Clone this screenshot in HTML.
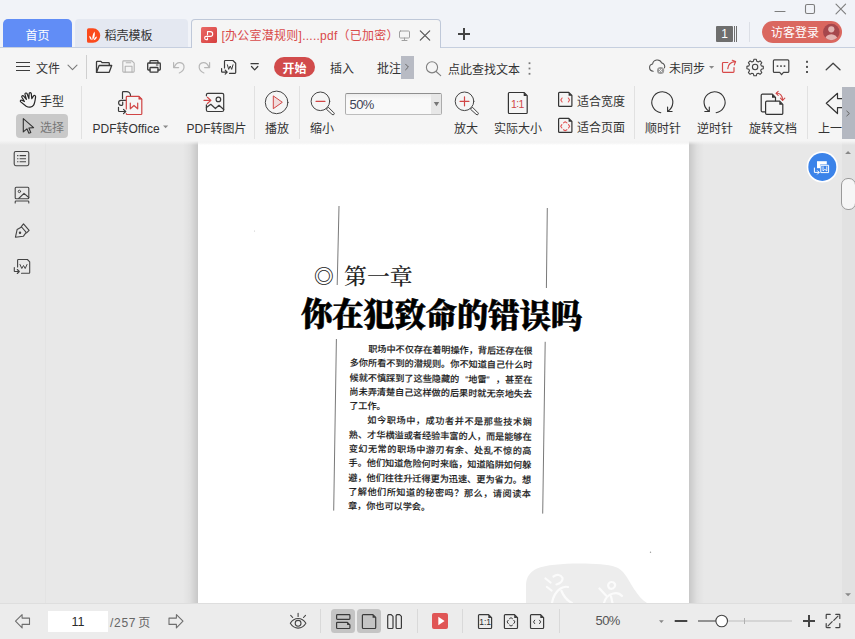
<!DOCTYPE html>
<html lang="zh-CN">
<head>
<meta charset="utf-8">
<title>[办公室潜规则].....pdf（已加密）</title>
<style>
*{box-sizing:border-box;margin:0;padding:0}
html,body{width:855px;height:639px;overflow:hidden;background:#f5f5f5}
body{font-family:"Liberation Sans","Noto Sans CJK SC",sans-serif;font-size:12px;color:#333;position:relative}
#app{position:absolute;left:0;top:0;width:855px;height:639px;overflow:hidden;background:#f5f5f5}
.abs{position:absolute}
.t{position:absolute;white-space:nowrap;line-height:16px;height:16px;font-size:12px;color:#333;margin-top:2px}
/* title bar */
#titlebar{position:absolute;left:0;top:0;width:855px;height:47px;background:#f1f3f8}
#tabline{position:absolute;left:0;top:47px;width:855px;height:1px;background:#c6cfdf}
#tab1{position:absolute;left:3px;top:19px;width:69px;height:28px;background:#618df6;border-radius:5px 5px 0 0;color:#fff;text-align:center}
#tab2{position:absolute;left:75px;top:19px;width:113px;height:28px;background:#e4e8f1;border-radius:4px 4px 0 0}
#tab3{position:absolute;left:191px;top:19px;width:250px;height:30px;background:#f5f5f5;border:1px solid #bfc8d9;border-bottom:none;border-radius:4px 4px 0 0}
/* toolbar */
#menurow{position:absolute;left:0;top:48px;width:855px;height:37px;background:#f5f5f5}
#ribbon{position:absolute;left:0;top:85px;width:855px;height:56px;background:#f5f5f5}
.vsep{position:absolute;width:1px;background:#e1e1e1}
/* doc */
#doc{position:absolute;left:0;top:141px;width:855px;height:462px;background:#e8e8e8;overflow:hidden}
#docfade{position:absolute;left:0;top:0;width:855px;height:4px;background:linear-gradient(#f4f4f4,rgba(232,232,232,0))}
#sideborder{position:absolute;left:45px;top:0;width:1px;height:462px;background:#e3e3e3}
#shl{position:absolute;left:183px;top:0;width:15px;height:462px;background:linear-gradient(90deg,rgba(0,0,0,0),rgba(0,0,0,.035) 45%,rgba(0,0,0,.14))}
#shr{position:absolute;left:689px;top:0;width:15px;height:462px;background:linear-gradient(270deg,rgba(0,0,0,0),rgba(0,0,0,.035) 45%,rgba(0,0,0,.14))}
#page{position:absolute;left:198px;top:0;width:491px;height:462px;background:#fff;overflow:hidden}
#pagefade{position:absolute;left:0;top:0;width:491px;height:4px;background:linear-gradient(#f0f0f0,rgba(255,255,255,0))}
#vscroll{position:absolute;left:842px;top:0;width:13px;height:462px;background:#e2e2e2}
#thumb{position:absolute;left:841px;top:37px;width:15px;height:32px;background:#f6f6f6;border:1px solid #9a9a9a;border-radius:7px}
/* status */
#status{position:absolute;left:0;top:603px;width:855px;height:36px;background:#ececec;box-shadow:inset 0 1px 0 #dedede}
#pgbox{position:absolute;left:48px;top:8px;width:60px;height:21px;background:#fff;text-align:center;line-height:23px;font-size:12.5px;color:#2a2a2a}
.sbtn{position:absolute;top:6px;width:24px;height:24px;background:#c4c4c4;border-radius:3.5px}
/* scanned text */
#bul{position:absolute;left:115.8px;top:121.6px;font-family:"Liberation Serif","Noto Serif CJK SC",serif;font-size:20.3px;line-height:28px;color:#222}
#chap{position:absolute;left:146px;top:122px;font-family:"Liberation Serif","Noto Serif CJK SC",serif;font-size:21.6px;font-weight:500;line-height:28px;color:#222;white-space:nowrap;transform-origin:0 50%;transform:scaleX(1.06)}
#head{position:absolute;left:102.5px;top:151.7px;font-family:"Liberation Serif","Noto Serif CJK SC",serif;font-weight:900;-webkit-text-stroke:.6px #000;font-size:33.4px;line-height:44px;color:#000;white-space:nowrap;transform-origin:0 50%;transform:rotate(0.45deg) scaleX(0.935)}
#body{position:absolute;left:152px;top:200.5px;width:184px;font-family:"Liberation Sans","Noto Sans CJK SC",sans-serif;font-weight:500;-webkit-text-stroke:.1px #1c1c1c;font-size:9.13px;line-height:14.28px;color:#1c1c1c;transform-origin:0 0;transform:rotate(0.7deg)}
#body p{white-space:nowrap;width:182.8px;text-align:justify;text-align-last:justify}
#body .q{display:inline-block;width:9.13px}
#body p.l{text-align-last:left;text-align:left}
#icons{position:absolute;left:0;top:0;width:855px;height:639px;pointer-events:none}
</style>
</head>
<body>
<div id="app">
<!-- TITLEBAR -->
<div id="titlebar"></div>
<div id="tabline"></div>
<div id="tab1"><span class="t" style="left:22.5px;top:7px;color:#fff">首页</span></div>
<div id="tab2"><span class="t" style="left:29.5px;top:7px;color:#333">稻壳模板</span></div>
<div id="tab3"><span class="t" style="left:29.5px;top:6px;color:#d94a4a;letter-spacing:0.25px">[办公室潜规则].....pdf（已加密）</span></div>
<span class="t" style="left:771px;top:23px;color:#fff;z-index:3">访客登录</span>
<div class="abs" style="left:762px;top:21px;width:80px;height:22px;border-radius:11px;background:#da675f"></div>
<div class="abs" style="left:716px;top:26px;width:17px;height:16px;background:#6e6e6e;border-radius:1px;color:#fff;font-size:12px;line-height:17px;text-align:center">1</div>
<!-- MENU ROW -->
<div id="menurow"></div>
<span class="t" style="left:36px;top:59px">文件</span>
<div class="abs" style="left:274px;top:57px;width:41px;height:20px;border-radius:10px;background:#d14b4b"></div>
<span class="t" style="left:282.5px;top:59px;color:#fff;font-weight:bold">开始</span>
<span class="t" style="left:330px;top:59px">插入</span>
<span class="t" style="left:377px;top:59px">批注</span>
<div class="abs" style="left:401px;top:56px;width:13px;height:23px;background:#b8bbc4"></div>
<span class="t" style="left:448px;top:60px">点此查找文本</span>
<span class="t" style="left:669px;top:59px">未同步</span>
<!-- RIBBON -->
<div id="ribbon"></div>
<span class="t" style="left:40px;top:92px">手型</span>
<div class="abs" style="left:16px;top:114px;width:52px;height:24px;border-radius:4px;background:#c9c9c9"></div>
<span class="t" style="left:40px;top:118px;color:#777">选择</span>
<span class="t" style="left:92.5px;top:119px">PDF转Office</span>
<span class="t" style="left:186.5px;top:119px">PDF转图片</span>
<span class="t" style="left:265px;top:119px">播放</span>
<span class="t" style="left:310px;top:119px">缩小</span>
<div class="abs" style="left:345px;top:93px;width:97px;height:22px;background:linear-gradient(#ececec,#f9f9f9 5px);border:1px solid #acacac;border-top-color:#8f8f8f;border-bottom-color:#bdbdbd;border-radius:2px"></div>
<div class="abs" style="left:431px;top:94px;width:10px;height:20px;background:#e7e7e7"></div>
<span class="t" style="left:349.5px;top:95px;color:#3e4456;font-size:13px;letter-spacing:-.6px">50%</span>
<span class="t" style="left:454px;top:119px">放大</span>
<span class="t" style="left:494px;top:119px">实际大小</span>
<span class="t" style="left:577px;top:92px">适合宽度</span>
<span class="t" style="left:577px;top:118px">适合页面</span>
<span class="t" style="left:645px;top:119px">顺时针</span>
<span class="t" style="left:697px;top:119px">逆时针</span>
<span class="t" style="left:749px;top:119px">旋转文档</span>
<span class="t" style="left:818px;top:119px">上一</span>
<div class="abs" style="left:842px;top:87px;width:13px;height:52px;background:#b4b8c1"></div>
<div class="vsep" style="left:86px;top:55px;height:24px;background:#cfcfcf"></div>
<div class="vsep" style="left:81px;top:86px;height:53px"></div>
<div class="vsep" style="left:254px;top:86px;height:53px"></div>
<div class="vsep" style="left:299px;top:86px;height:53px"></div>
<div class="vsep" style="left:634px;top:86px;height:53px"></div>
<div class="vsep" style="left:807px;top:86px;height:53px"></div>
<div class="vsep" style="left:749px;top:22px;height:20px;background:#dcdfe6"></div>
<!-- DOC -->
<div id="doc">
  <div id="sideborder"></div>
  <div id="shl"></div><div id="shr"></div>
  <div id="vscroll"></div>
  <div id="page">
    <svg class="abs" style="left:0;top:0" width="491" height="462" viewBox="198 141 491 462"><path d="M526 603V586C526 578 529 572.500 537 568.500C547 564.500 565 563.200 585 563.500C600 563.800 612 565 618 568C625 572 629 581 634 589C638 595 642 600 647 603Z" fill="#ededed"/><g fill="none" stroke="#fbfbfb" stroke-width="2.200" stroke-linecap="round" stroke-linejoin="round"><path d="M545.500 578.500L550.500 582.500M547 587L551.500 590.500M553.500 576.500C557 574 561 574.500 562.500 578C563 581 560 583.500 556.500 584.500M552 603C553 597 556 591.500 560.500 588.500C563 587 566 586.500 568 587M561.500 591C563.500 596 567 600.500 572 603"/><path d="M611.500 582C614.500 582 616 584.500 614.500 587C613 589.500 609.500 589.500 608.500 587C607.500 584.500 609 582 611.500 582ZM599.500 588.500L606 595.500M604 603C605 598.500 608 595 613 593.500C616.500 592.500 620 593.500 622 596M611 596.500L612.500 603"/></g><circle cx="650.500" cy="552.300" r=".7" fill="#9a9a9a"/><circle cx="254.500" cy="231" r=".6" fill="#c4c4c4"/></svg>
    <div id="bul">◎</div>
    <div id="chap">第一章</div>
    <div id="head">你在犯致命的错误吗</div>
    <div id="body">
      <p style="text-indent:18.3px">职场中不仅存在着明操作，背后还存在很</p>
      <p>多你所看不到的潜规则。你不知道自己什么时</p>
      <p>候就不慎踩到了这些隐藏的<span class="q" style="text-align:right;text-align-last:right">“</span>地雷<span class="q" style="text-align:left;text-align-last:left">”</span>，甚至在</p>
      <p>尚未弄清楚自己这样做的后果时就无奈地失去</p>
      <p class="l">了工作。</p>
      <p style="text-indent:18.3px">如今职场中，成功者并不是那些技术娴</p>
      <p>熟、才华横溢或者经验丰富的人，而是能够在</p>
      <p>变幻无常的职场中游刃有余、处乱不惊的高</p>
      <p>手。他们知道危险何时来临，知道陷阱如何躲</p>
      <p>避，他们往往升迁得更为迅速、更为省力。想</p>
      <p>了解他们所知道的秘密吗？那么，请阅读本</p>
      <p class="l">章，你也可以学会。</p>
    </div>
    <div id="pagefade"></div>
  </div>
  <div id="docfade"></div>
  <div id="thumb"></div>
</div>
<!-- STATUS -->
<div id="status">
  <div id="pgbox">11</div>
  <span class="t" style="left:110px;top:10px;color:#666"><span style="letter-spacing:.7px">/257</span><span style="margin-left:2px">页</span></span>
  <div class="sbtn" style="left:331px"></div>
  <div class="sbtn" style="left:357px"></div>
  <div class="abs" style="left:432px;top:10px;width:16px;height:16px;border-radius:2px;background:#e05656"></div>
  <span class="t" style="left:595.5px;top:8px;color:#555;font-size:13px;letter-spacing:-.6px">50%</span>
  <div class="vsep" style="left:320px;top:6px;height:24px;background:#d9d9d9"></div>
  <div class="vsep" style="left:417px;top:6px;height:24px;background:#d9d9d9"></div>
  <div class="vsep" style="left:462px;top:6px;height:24px;background:#d9d9d9"></div>
  <div class="vsep" style="left:559px;top:6px;height:24px;background:#d9d9d9"></div>
</div>
<!-- ICON OVERLAY -->
<svg id="icons" width="855" height="639" viewBox="0 0 855 639" fill="none" stroke="#3d3d3d" stroke-width="1" stroke-linecap="round" stroke-linejoin="round">
<!-- ===== title bar ===== -->
<g stroke="#7d7d7d" stroke-width="1.1">
<path d="M775 11.5h10"/>
<rect x="805.5" y="4.5" width="9" height="9" rx="1.6"/>
<path d="M836 4.2l9.6 9.6M845.6 4.2l-9.6 9.6"/>
</g>
<path d="M734.5 26v16M736.5 26v16" stroke="#6e6e6e" stroke-width="1" stroke-linecap="butt"/>
<!-- avatar -->
<g stroke="none">
<circle cx="831.3" cy="32" r="8.3" fill="#a6474c"/>
<clipPath id="avc"><circle cx="831.3" cy="32" r="8.3"/></clipPath>
<g clip-path="url(#avc)" fill="#e3b3b1"><circle cx="831.3" cy="29.3" r="3.1"/><ellipse cx="831.3" cy="39.8" rx="6.2" ry="5.6"/></g>
</g>
<!-- tab2 icon -->
<g stroke="none">
<path d="M88.6 28.3h4.4a7.25 7.25 0 0 1 0 14.5h-4.4a1.6 1.6 0 0 1-1.6-1.6v-11.3a1.6 1.6 0 0 1 1.6-1.6z" fill="#fb4a1c"/>
<path d="M92.6 40.2c-.6-2.600-.2-5.600 1.900-8.600c.9 3.200.2 6.300-1.900 8.600zM91.700 40.300c-1.600-.9-2.400-2.500-2.400-4.600c1.700.9 2.500 2.500 2.400 4.600zM93.700 40.300c.3-1.900 1.400-3.200 3.300-3.700c-.2 2-1.300 3.300-3.300 3.700z" fill="#fff"/>
</g>
<!-- tab3 pdf icon -->
<defs><linearGradient id="pg" x1="0" y1="0" x2="1" y2="1"><stop offset="0" stop-color="#ea6a66"/><stop offset="1" stop-color="#d63f3f"/></linearGradient></defs>
<rect x="201" y="27" width="16" height="16" rx="1.5" fill="url(#pg)" stroke="none"/>
<path d="M207.500 34.700v-3.100h2.800a2.400 2.400 0 0 1 0 4.800h-4.100a1.600 1.600 0 0 0 0 3.200h1.300v-1.700" stroke="#fff" stroke-width="1.100"/>
<!-- monitor, close, plus -->
<g stroke="#a0a0a0" stroke-width="1"><rect x="399.500" y="31" width="10" height="7" rx="1"/><path d="M404.500 38v2.500M402 40.500h5"/></g>
<path d="M420.300 30.800l9.400 9.400M429.700 30.800l-9.400 9.400" stroke="#555" stroke-width="1.200"/>
<path d="M458 34h12M464 28v12" stroke="#444" stroke-width="2" stroke-linecap="butt"/>
<!-- ===== menu row ===== -->
<path d="M16 62.500h14M16 66.500h14M16 70.500h14" stroke="#3d3d3d" stroke-width="1.200" stroke-linecap="butt"/>
<path d="M68 65.200l4.500 4.500l4.500-4.500" stroke="#7a7a7a" stroke-width="1.100"/>
<!-- folder -->
<g stroke="#3a3a3a" stroke-width="1.300">
<path d="M96.500 72.300v-10.100a.8.800 0 0 1 .8-.8h3.600l1.300 1.300h6.300a.8.800 0 0 1 .8.800v1.900"/>
<path d="M96.500 72.300l2.600-6.800h12.600l-2.500 6.800z"/>
</g>
<!-- save (disabled) -->
<g stroke="#b4b4b4" stroke-width="1.100">
<path d="M123.600 60.900h8.300l2.300 2.300v8.100a.8.800 0 0 1-.8.800h-9.800a.8.800 0 0 1-.8-.8v-9.600a.8.800 0 0 1 .8-.8z"/>
<path d="M126.200 62.700h4.600M125.200 72v-5.800h6.800v5.800"/>
</g>
<!-- printer -->
<g stroke="#3a3a3a" stroke-width="1.300">
<path d="M150 63v-1.500a.8.800 0 0 1 .8-.8h6.400a.8.800 0 0 1 .8.800v1.500"/>
<path d="M150 70h-1.500a.8.800 0 0 1-.8-.8v-5.400a.8.800 0 0 1 .8-.8h11a.8.800 0 0 1 .8.800v5.400a.8.800 0 0 1-.8.800h-1.500"/>
<rect x="150" y="67.500" width="8" height="4.700" rx=".7"/>
<path d="M156.300 65h1.700" stroke-width="1"/>
</g>
<!-- undo / redo -->
<g stroke="#b7b7b7" stroke-width="1.200">
<path d="M173.600 62.600v5h5"/>
<path d="M174.200 67.300C175.500 64 178 62.400 180 62.600C182.600 62.900 184.200 65 184 67.500C183.800 70 182 71.800 179.300 73"/>
<path d="M209.600 62.600v5h-5"/>
<path d="M209 67.300C207.700 64 205.200 62.400 203.200 62.600C200.600 62.900 199 65 199.200 67.500C199.400 70 201.200 71.800 203.900 73"/>
</g>
<!-- convert -->
<g stroke="#3a3a3a" stroke-width="1.200">
<path d="M224.500 68v-6.700a.8.800 0 0 1 .8-.8h7.600l2.800 2.700v9.300a.8.800 0 0 1-.8.800h-5.400"/>
<path d="M227.400 64.800l1.300 4.600l1.500-3.400l1.500 3.400l1.300-4.600" stroke-width="1"/>
<path d="M221.600 68.500v3a.6.600 0 0 0 .6.600h4.800M225.200 70.100l2 2l-2 2"/>
</g>
<path d="M251 63.700h7.300M251.500 66.500l3.150 3.400l3.150-3.400" stroke="#3a3a3a" stroke-width="1.200"/>
<path d="M405.600 64.200l2.800 2.800l-2.800 2.800" stroke="#666" stroke-width="1"/>
<!-- search -->
<g stroke="#808080" stroke-width="1.100"><circle cx="432" cy="67.300" r="5.600"/><path d="M436.100 71.500l4.600 4.200"/></g>
<g fill="#7a7a7a" stroke="none"><rect x="528.600" y="62.300" width="1.800" height="1.800"/><rect x="528.600" y="67.600" width="1.800" height="1.800"/><rect x="528.600" y="72.900" width="1.800" height="1.800"/></g>
<!-- cloud -->
<path d="M653.200 71.200a3.600 3.600 0 0 1-.6-7.150a4.700 4.700 0 0 1 9-1.200a3.700 3.700 0 0 1 2.900 5" stroke="#555" stroke-width="1.100"/>
<circle cx="660.600" cy="70.500" r="3.600" fill="#9a9a9a" stroke="none"/>
<path d="M659.300 69.200l2.600 2.600M661.900 69.200l-2.600 2.600" stroke="#fff" stroke-width=".9"/>
<path d="M709 66h5.200l-2.600 2.800z" fill="#8a8a8a" stroke="none"/>
<!-- share -->
<g stroke="#d84a4a" stroke-width="1.200">
<path d="M727.800 62.500h-4.500a.8.800 0 0 0-.8.800v8.200a.8.800 0 0 0 .8.800h9.900a.8.800 0 0 0 .8-.8v-4"/>
<path d="M727.800 68.600c.3-3.900 3.100-6.500 7.400-6.900M732.300 60.300l3.300 1.300l-1.300 3.300"/>
</g>
<!-- gear -->
<g stroke="#444" stroke-width="1.100">
<circle cx="755.100" cy="67" r="2.700"/>
<path d="M753.900 59.300h2.400l.5 2l1.500.7l1.800-1.100l1.700 1.700l-1.100 1.800l.6 1.500l2 .5v2.400l-2 .5l-.6 1.500l1.100 1.800l-1.700 1.700l-1.800-1.100l-1.500.6l-.5 2h-2.400l-.5-2l-1.500-.6l-1.800 1.100l-1.700-1.700l1.100-1.800l-.6-1.500l-2-.5v-2.400l2-.5l.6-1.500l-1.100-1.800l1.700-1.700l1.800 1.100l1.500-.7z"/>
</g>
<!-- comment -->
<path d="M774.400 59.900h13.400a1 1 0 0 1 1 1v10.500a1 1 0 0 1-1 1h-4.300l-1.900 2.300l-1.900-2.300h-5.300a1 1 0 0 1-1-1v-10.500a1 1 0 0 1 1-1z" stroke="#444" stroke-width="1.200"/>
<g fill="#444" stroke="none"><rect x="776.700" y="65.300" width="1.600" height="1.600"/><rect x="780.200" y="65.300" width="1.600" height="1.600"/><rect x="783.700" y="65.300" width="1.600" height="1.600"/></g>
<g fill="#555" stroke="none"><rect x="806" y="60.800" width="2" height="2"/><rect x="806" y="65.900" width="2" height="2"/><rect x="806" y="71" width="2" height="2"/></g>
<path d="M826.200 69.800l6.900-6.600l6.900 6.600" stroke="#444" stroke-width="1.300"/>
<!-- ===== ribbon ===== -->
<!-- hand -->
<path d="M20.700 101.900C19.800 101 20.600 99.800 21.800 100.200L24.400 101.500L21.900 97.300C21.300 96 22.800 95 23.700 96.100L26.400 99.400L25 94.400C24.700 93 26.500 92.400 27.100 93.800L28.900 98.600L29.100 93.800C29.200 92.400 31.100 92.300 31.300 93.700L31.800 98.600L33.400 96.200C34 95 35.800 95.400 35.600 96.800C35.200 100 34.900 103 33.600 105.200C32 107.600 28.600 107.700 26.200 106.200Z" stroke="#262626" stroke-width="1.200"/>
<!-- cursor -->
<path d="M23.300 118.700v13.200l3.600-3.100l2 4.500l1.900-.8l-1.900-4.500l4.700-.4z" stroke="#333" stroke-width="1.100"/>
<!-- pdf to office -->
<g stroke="#3a3a3a" stroke-width="1.200">
<path d="M122.500 98.500v-6.100a.8.800 0 0 1 .8-.8h3.200a4 4 0 0 1 4 4"/>
<path d="M126 100.300h-4.900a2.500 2.500 0 0 0 0 5h.8a.8.800 0 0 0 .8-.8v-2.500"/>
<path d="M118.500 107.300v3.400a.8.800 0 0 0 .8.800h6.200M123.500 109.300l2.200 2.200l-2.200 2.200"/>
</g>
<g stroke="#d04545" stroke-width="1.200">
<path d="M126.300 109v-11.800a.8.800 0 0 1 .8-.8h11.900l2.800 2.800v14.500a.8.800 0 0 1-.8.800h-13.900a.8.800 0 0 1-.8-.8"/>
<path d="M130.300 103v5.800l3.700-3.300l3.700 3.300v-5.800"/>
<path d="M139 96.400l2.800 2.800h-2.800z" fill="#d04545" stroke-width=".6"/>
</g>
<path d="M163 125.500h5.200l-2.600 2.700z" fill="#8a8a8a" stroke="none"/>
<!-- pdf to image -->
<g stroke="#3a3a3a" stroke-width="1.200">
<path d="M206.400 95.800v-1a1.500 1.500 0 0 1 1.500-1.500h14.300a1.500 1.500 0 0 1 1.500 1.500v15.200a1.500 1.500 0 0 1-1.500 1.500h-14.300a1.500 1.500 0 0 1-1.500-1.500v-5.100"/>
<circle cx="218.400" cy="99.400" r="2.300"/>
<path d="M206.400 107.600l4.400-3.300l4.600 4.200l3.600-3.200l4.700 4.200"/>
</g>
<path d="M204 100.400h6.700M207.400 97.300l3.500 3.100l-3.500 3.100" stroke="#d04545" stroke-width="1.200"/>
<!-- play -->
<circle cx="276.600" cy="102.400" r="11.300" stroke="#444" stroke-width="1"/>
<path d="M273.300 96.300v12.400l8.700-6.200z" stroke="#d04545" stroke-width="1" fill="#f1dcdc"/>
<!-- zoom out -->
<circle cx="320.400" cy="101.300" r="9.300" stroke="#444" stroke-width="1"/>
<path d="M316 101.300h9" stroke="#d04545" stroke-width="1.200"/>
<path d="M326.600 108.900l1.700-1.700l5.600 5.600a1.200 1.200 0 0 1-1.700 1.700z" stroke="#444" stroke-width="1"/>
<!-- combo arrow -->
<path d="M433.800 102h5.400l-2.700 4.200z" fill="#777" stroke="none"/>
<!-- zoom in -->
<circle cx="464.500" cy="101.300" r="9.300" stroke="#444" stroke-width="1"/>
<path d="M460 101.300h9M464.500 96.800v9" stroke="#d04545" stroke-width="1.200"/>
<path d="M470.700 108.900l1.700-1.700l5.600 5.600a1.200 1.200 0 0 1-1.700 1.700z" stroke="#444" stroke-width="1"/>
<!-- 1:1 -->
<path d="M509.300 92.500h14.700l3.200 3.200v16.900a.9.900 0 0 1-.9.900h-17a.9.900 0 0 1-.9-.9v-19.200a.9.900 0 0 1 .9-.9z" stroke="#333" stroke-width="1.200"/>
<path d="M523.700 92.500l3.500 3.500h-3.500z" fill="#333" stroke="none"/>
<g font-family="Liberation Sans, sans-serif" font-size="10.500" fill="#d04545" stroke="none" text-anchor="middle"><text x="514" y="107.800">1</text><text x="517.700" y="107.300" font-size="10">:</text><text x="521.400" y="107.800">1</text></g>
<!-- fit width / page -->
<g stroke="#333" stroke-width="1.200">
<path d="M559.500 92.400h9.300l3.100 3.100v9.900a.9.900 0 0 1-.9.900h-11.500a.9.900 0 0 1-.9-.9v-12.100a.9.900 0 0 1 .9-.9z"/>
<path d="M559.500 118.400h9.300l3.100 3.100v9.900a.9.900 0 0 1-.9.900h-11.500a.9.900 0 0 1-.9-.9v-12.100a.9.900 0 0 1 .9-.9z"/>
</g>
<path d="M568.600 92.400l3.300 3.300h-3.300zM568.600 118.400l3.300 3.300h-3.300z" fill="#333" stroke="none"/>
<g stroke="#e25555" stroke-width="1.100">
<path d="M562.100 98l-1.300 2l1.300 2M568.300 98l1.300 2l-1.300 2"/>
<path d="M561.900 124.600l-1.200 1.700l1.200 1.700M568.500 124.600l1.200 1.700l-1.200 1.700M563.500 122.900l1.700-1.100l1.700 1.100M563.500 129.700l1.700 1.100l1.700-1.100"/>
</g>
<!-- rotate cw / ccw -->
<g stroke="#333" stroke-width="1.100">
<path d="M660.800 112.700a10.500 10.500 0 1 1 7.100-1.500"/>
<path d="M667.600 107v4.500h4.500"/>
<path d="M716.100 112.700a10.500 10.500 0 1 0-7.100-1.500"/>
<path d="M709.300 107v4.500h-4.500"/>
</g>
<!-- rotate doc -->
<g stroke="#333" stroke-width="1.200" fill="#f5f5f5">
<path d="M762.400 94.200h10l3.100 3.100v13.300a1.200 1.200 0 0 1-1.200 1.200h-11.900a1.200 1.200 0 0 1-1.200-1.200v-15.200a1.200 1.200 0 0 1 1.200-1.200z"/>
<path d="M766.800 101.200h12.900l3.100 3.100v8.900a1.200 1.200 0 0 1-1.200 1.200h-14.800a1.200 1.200 0 0 1-1.200-1.200v-10.800a1.200 1.200 0 0 1 1.200-1.200z"/>
</g>
<path d="M772 94.200l3.500 3.500h-3.500zM779.300 101.200l3.500 3.500h-3.500z" fill="#333" stroke="none"/>
<g stroke="#d04545" stroke-width="1.100">
<path d="M776.300 93.300c3.700-.5 6.300 2.200 6.300 6.700"/>
<path d="M778.200 91.300l-2.100 2l2.100 2M780.400 98.200l2.200 2.200l2.200-2.200"/>
</g>
<!-- left arrow (prev) -->
<path d="M842.500 98.600h-5v-5.300l-11.200 10l11.200 10.200v-5.900h5" stroke="#333" stroke-width="1.200"/>
<rect x="842" y="87" width="13" height="52" fill="#b4b8c1" stroke="none"/>
<path d="M846.800 111.100l2.600 2.400l-2.600 2.400" stroke="#666" stroke-width="1"/>
<!-- ===== sidebar ===== -->
<g stroke="#444" stroke-width="1.100">
<rect x="14.200" y="151.500" width="14.600" height="14.200" rx="1.600"/>
<path d="M19.600 155.600h6.400M19.600 158.700h6.400M19.600 161.700h6.400" stroke-linecap="butt"/>
<path d="M17.100 155.600h1.300M17.100 158.700h1.300M17.100 161.700h1.300" stroke-linecap="butt"/>
<rect x="15.200" y="187.300" width="13.600" height="11.400" rx="1"/>
<circle cx="19.400" cy="191.400" r="1.200" stroke-width="1"/>
<path d="M18.700 198.500l5.300-5.100l4.800 4.100"/>
<path d="M15.200 203v-1.200a.8.800 0 0 1 .8-.8h12a.8.800 0 0 1 .8.800v1.200"/>
<!-- pen -->
<path d="M15.400 237.300l1.700-7.700l4.500-2.600l4.600 5.400l-2.900 3.900z"/>
<path d="M21.300 226.700l2.200-2.800l5.600 6.500l-2.500 2.500"/>
<circle cx="20" cy="232.700" r=".7" fill="#444"/>
<!-- convert -->
<path d="M17.600 267v-6.700a.8.800 0 0 1 .8-.8h9l2.300 2.300v10.700a.8.800 0 0 1-.8.800h-7.400"/>
<path d="M20 264.500l1.800 4l1.700-3l1.700 3l1.800-4" stroke-width="1"/>
<path d="M14.300 267.500v3.400a.6.600 0 0 0 .6.600h4M17.300 269.500l2 2l-2 2"/>
</g>
<!-- blue float button -->
<g stroke="none">
<circle cx="822.300" cy="166.900" r="15.600" fill="#fff"/>
<circle cx="822.300" cy="166.900" r="14" fill="#3b83e9"/>
<rect x="817" y="161.200" width="9.800" height="7" fill="#fff"/>
<rect x="820.300" y="164.400" width="9.200" height="9.100" fill="#3b83e9"/>
</g>
<g stroke="#fff" stroke-width="1">
<rect x="821.200" y="165.300" width="7.400" height="7.300" fill="none"/>
<path d="M823 166.800v4.200l1.900-1.700l1.900 1.700v-4.200" stroke-width=".9"/>
<path d="M814.400 168v4.400h4.600M817.500 170.700l1.700 1.700l-1.700 1.700"/>
</g>
<!-- scroll arrows -->
<path d="M845.100 153.900h5.900l-2.950-3z" fill="#888" stroke="none"/>
<path d="M845.100 593.300h5.900l-2.950 3z" fill="#888" stroke="none"/>
<!-- ===== status bar ===== -->
<g stroke="#6e6e6e" stroke-width="1.100">
<path d="M15.500 621.200l6.600-6.600v3.500h7.400v6.300h-7.400v3.500z"/>
<path d="M183 621.200l-6.600-6.600v3.500h-7.400v6.300h7.400v3.500z"/>
</g>
<!-- eye -->
<g stroke="#444" stroke-width="1.100">
<path d="M290.300 623.300c2-3.200 4.700-4.800 7.800-4.800s5.800 1.600 7.800 4.800c-2 3.200-4.700 4.800-7.800 4.800s-5.800-1.600-7.800-4.800z"/>
<circle cx="298.100" cy="623.300" r="2.900"/>
<path d="M298.100 613.200v3.300M290.700 615.300l2 2.200M305.500 615.300l-2 2.200"/>
</g>
<!-- view mode icons -->
<g stroke="#3a3a3a" stroke-width="1.200">
<rect x="336.600" y="614.600" width="13.300" height="4.800" rx=".8"/>
<path d="M337.400 622.300h10l2.500 2.500v2.900a.8.800 0 0 1-.8.800h-11.700a.8.800 0 0 1-.8-.8v-4.600a.8.800 0 0 1 .8-.8z"/>
<path d="M363.300 614.600h9.600l2.800 2.800v10.200a.9.900 0 0 1-.9.900h-11.500a.9.900 0 0 1-.9-.9v-12.100a.9.900 0 0 1 .9-.9z"/>
<path d="M388.600 614.600h2.600l1.800 1.800v11.200a.9.900 0 0 1-.9.900h-3.500a.9.900 0 0 1-.9-.9v-11.400a1.600 1.600 0 0 1 .9-1.600z"/>
<path d="M397 614.600h2.600l1.800 1.800v11.200a.9.900 0 0 1-.9.900h-3.500a.9.900 0 0 1-.9-.9v-11.400a1.600 1.600 0 0 1 .9-1.600z"/>
</g>
<path d="M347.100 622.300l2.800 2.800h-2.800zM372.600 614.600l3.100 3.100h-3.100z" fill="#3a3a3a" stroke="none"/>
<path d="M438.300 616.800v8.400l6.300-4.200z" fill="#fff" stroke="none"/>
<!-- 1:1, fit page, fit width -->
<g stroke="#3a3a3a" stroke-width="1.200">
<path d="M479.400 614.600h9.200l3 3v10a.9.900 0 0 1-.9.900h-11.300a.9.900 0 0 1-.9-.9v-12.100a.9.900 0 0 1 .9-.9z"/>
<path d="M505.300 614.600h9.200l3 3v10a.9.900 0 0 1-.9.900h-11.300a.9.900 0 0 1-.9-.9v-12.100a.9.900 0 0 1 .9-.9z"/>
<path d="M531.400 614.600h9.200l3 3v10a.9.900 0 0 1-.9.900h-11.300a.9.900 0 0 1-.9-.9v-12.100a.9.900 0 0 1 .9-.9z"/>
</g>
<path d="M488.300 614.600l3.300 3.300h-3.300zM514.200 614.600l3.300 3.300h-3.300zM540.300 614.600l3.300 3.300h-3.300z" fill="#3a3a3a" stroke="none"/>
<g font-family="Liberation Sans, sans-serif" font-size="8.500" fill="#2a2a2a" stroke="none" text-anchor="middle"><text x="481.700" y="625.400">1</text><text x="485.100" y="625">:</text><text x="488.500" y="625.400">1</text></g>
<g stroke="#3a3a3a" stroke-width="1">
<path d="M508.200 620.300l-1.100 1.600l1.100 1.600M513.800 620.300l1.100 1.600l-1.100 1.600M509.500 618.700l1.500-1l1.500 1M509.500 625.100l1.500 1l1.500-1"/>
<path d="M534.700 620.200l-1.200 1.700l1.200 1.700M539.500 620.200l1.200 1.700l-1.200 1.700"/>
</g>
<path d="M659 620.200h4.800l-2.400 2.700z" fill="#888" stroke="none"/>
<!-- zoom slider -->
<path d="M674.700 621h12.600" stroke="#444" stroke-width="2" stroke-linecap="butt"/>
<path d="M698 621h24" stroke="#555" stroke-width="1.200" stroke-linecap="butt"/>
<path d="M722 621h70" stroke="#bdbdbd" stroke-width="1.200" stroke-linecap="butt"/>
<path d="M744.500 618v6" stroke="#b0b0b0" stroke-width="1" stroke-linecap="butt"/>
<circle cx="721.700" cy="621" r="5.800" fill="#fff" stroke="#444" stroke-width="1.100"/>
<path d="M803 621h12M809 615v12" stroke="#444" stroke-width="2" stroke-linecap="butt"/>
<g stroke="#444" stroke-width="1.200">
<path d="M826.200 618.500v-3.500a.6.600 0 0 1 .6-.6h3.400M835.800 614.400h3.400a.6.600 0 0 1 .6.600v3.500M839.800 623.500v3.500a.6.600 0 0 1-.6.600h-3.400M830.200 627.600h-3.400a.6.600 0 0 1-.6-.6v-3.500"/>
<path d="M838 616.200l-4.200 4.200M828 625.800l4.200-4.200"/>
</g>
<!-- ===== scanned page decorations ===== -->
<g stroke="#6a6a6a" stroke-width=".9" stroke-linecap="butt">
<path d="M339 206L337.200 285"/>
<path d="M547.300 208L546.400 288"/>
<path d="M336.400 339L333.700 510.600"/>
<path d="M545.200 341.800L542.700 513.600"/>
</g>

</svg>
</div>
</body>
</html>
